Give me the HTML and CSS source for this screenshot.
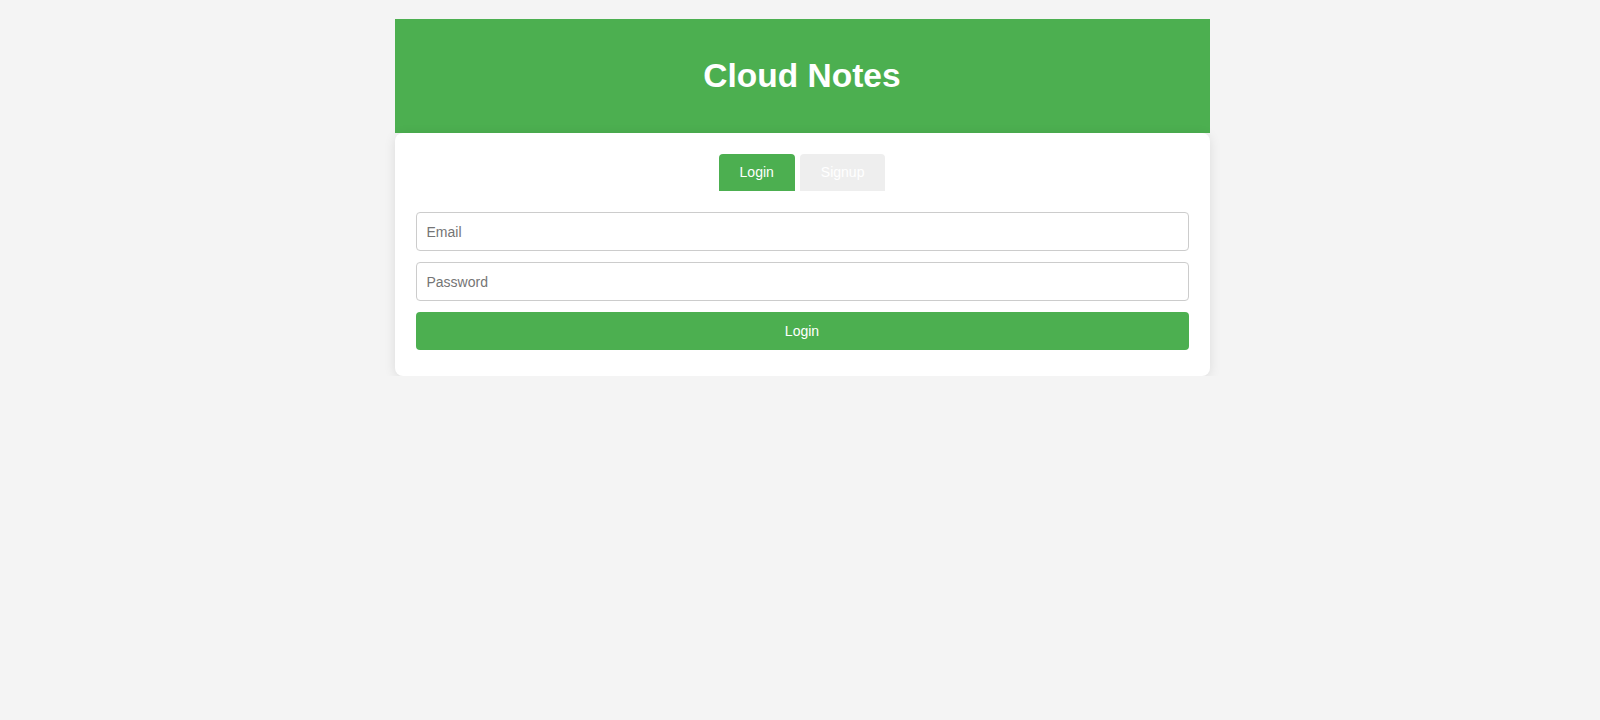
FILE: index.html
```html
<!DOCTYPE html>
<html>
<head>
<meta charset="utf-8">
<title>Cloud Notes</title>
<link rel="stylesheet" href="styles.css">
</head>
<body>
<div class="container">
  <header class="header"><h1>Cloud Notes</h1></header>
  <div class="card">
    <div class="tabs">
      <button class="tab active">Login</button>
      <button class="tab">Signup</button>
    </div>
    <form class="form">
      <input class="field" type="email" placeholder="Email">
      <input class="field" type="password" placeholder="Password">
      <button class="submit" type="button">Login</button>
    </form>
  </div>
</div>
</body>
</html>
```
FILE: styles.css
```css
* { box-sizing: border-box; }
body {
  margin: 0;
  padding: 0 0 0 4px;
  background: #f4f4f4;
  font-family: "Liberation Sans", Arial, sans-serif;
}
.container {
  width: 815px;
  margin: 19px auto 0;
}
.header {
  height: 114px;
  background: #4caf50;
  display: flex;
  align-items: center;
  justify-content: center;
}
.header h1 {
  margin: 0;
  color: #fff;
  font-size: 33.5px;
  font-weight: bold;
}
.card {
  background: #fff;
  border-radius: 8px;
  box-shadow: 0 2px 12px rgba(0,0,0,0.1);
  padding: 21px 21px 26px;
}
.tabs {
  display: flex;
  justify-content: center;
  gap: 5px;
  margin-bottom: 21px;
}
.tab {
  border: none;
  font-family: inherit;
  font-size: 14px;
  line-height: 17px;
  padding: 10px 21px;
  border-radius: 4px 4px 0 0;
  background: #eeeeee;
  color: #fff;
}
.tab.active { background: #4caf50; }
.form {
  display: flex;
  flex-direction: column;
  gap: 11px;
}
.field {
  height: 39px;
  border: 1px solid #ccc;
  border-radius: 4px;
  padding: 0 10px;
  font-family: inherit;
  font-size: 14px;
  color: #333;
}
.field::placeholder { color: #757575; }
.submit {
  height: 38px;
  border: none;
  border-radius: 4px;
  background: #4caf50;
  color: #fff;
  font-family: inherit;
  font-size: 14px;
}
```
